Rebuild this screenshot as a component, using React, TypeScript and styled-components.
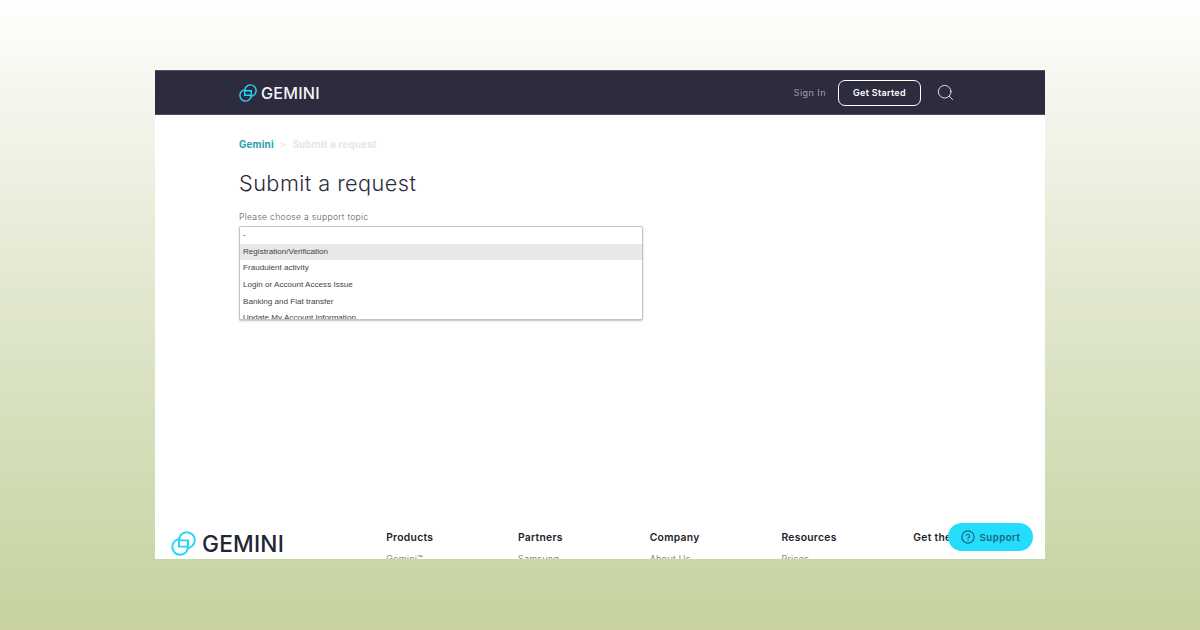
import React from 'react'
import styled, { createGlobalStyle } from 'styled-components'
import { Search } from 'lucide-react'

const GlobalStyle = createGlobalStyle`
  html, body {
    margin: 0;
    height: 630px;
    overflow: hidden;
  }
  body {
    background: linear-gradient(180deg, #ffffff 0%, #f4f6ec 16%, #dfe6cc 50%, #cdd8ab 85%, #c7d2a0 100%);
    font-family: "Inter", "Liberation Sans", sans-serif;
  }
`

const Stage = styled.div`
  padding: 70px 155px 0;
`

const Browser = styled.div`
  position: relative;
  height: 489px;
  background: #fff;
  overflow: hidden;
`

const Header = styled.header`
  height: 45px;
  box-sizing: border-box;
  background: #2d2c3e;
  border-top: 1px solid #55546a;
  border-bottom: 1px solid #4a4958;
  display: flex;
  align-items: center;
  padding: 0 90px 0 84px;
`

const Logo = styled.div<{ $large?: boolean }>`
  display: flex;
  align-items: center;
  gap: ${({ $large }) => ($large ? '6px' : '4px')};
  font-family: "Inter", sans-serif;
  font-weight: 500;
  font-size: ${({ $large }) => ($large ? '22.7px' : '16.2px')};
  letter-spacing: 0.2px;
  color: ${({ $large }) => ($large ? '#1f2733' : '#f4f4f6')};
`

const Nav = styled.nav`
  margin-left: auto;
  display: flex;
  align-items: center;
`

const SignIn = styled.a`
  font-size: 9px;
  font-weight: 300;
  letter-spacing: 0.5px;
  color: #c0c0c8;
  margin-right: 12px;
`

const GetStarted = styled.a`
  width: 83px;
  height: 26px;
  box-sizing: border-box;
  border: 1.5px solid #fff;
  border-radius: 7px;
  display: flex;
  align-items: center;
  justify-content: center;
  font-size: 9px;
  font-weight: 600;
  letter-spacing: 0.3px;
  color: #fff;
  margin-right: 15px;
`

const Main = styled.main`
  padding: 23px 84px 0;
  height: 400px;
  box-sizing: border-box;
`

const Crumbs = styled.div`
  display: flex;
  gap: 6px;
  font-size: 9.8px;
  font-weight: 700;
  line-height: 13px;
  letter-spacing: 0.2px;
`

const CrumbLink = styled.span`
  color: #2a9db3;
`

const CrumbSep = styled.span`
  color: #dfe3e5;
  font-weight: 400;
`

const CrumbCurrent = styled.span`
  color: #e4e6e8;
`

const Title = styled.h1`
  margin: 18px 0 0;
  font-size: 21.7px;
  line-height: 28px;
  font-weight: 300;
  letter-spacing: 0.45px;
  color: #2d2c3e;
`

const FieldLabel = styled.label`
  display: block;
  margin-top: 14px;
  font-size: 8.6px;
  font-weight: 300;
  line-height: 12px;
  letter-spacing: 0.3px;
  color: #5c5c5c;
`

const ListBox = styled.div`
  margin-top: 3px;
  width: 404px;
  height: 94px;
  box-sizing: border-box;
  border: 1px solid #c4c4c4;
  border-radius: 2px;
  box-shadow: 0 1px 2px rgba(0, 0, 0, 0.25);
  overflow: hidden;
  background: #fff;
`

const Option = styled.div<{ $active?: boolean }>`
  height: 16.7px;
  line-height: 16px;
  padding-left: 3px;
  font-family: "Liberation Sans", Arial, sans-serif;
  font-size: 8.1px;
  color: #444;
  white-space: nowrap;
  background: ${({ $active }) => ($active ? '#e8e8e8' : 'transparent')};
`

const Footer = styled.footer`
  display: flex;
  align-items: flex-start;
  padding: 0 0 0 16px;
`

const FooterBrand = styled.div`
  width: 215.5px;
  padding-top: 15px;
`

const FooterColumn = styled.div`
  width: 132px;
  padding-top: 15px;
`

const ColumnTitle = styled.div`
  font-size: 10.3px;
  line-height: 14px;
  font-weight: 600;
  letter-spacing: 0.3px;
  color: #22222c;
  white-space: nowrap;
`

const ColumnLink = styled.div`
  margin-top: 9px;
  font-size: 9px;
  font-weight: 300;
  line-height: 12px;
  letter-spacing: 0.3px;
  color: #5c5c5c;
`

const SupportButton = styled.button`
  position: absolute;
  left: 793px;
  top: 453px;
  width: 85px;
  height: 28px;
  border: 0;
  border-radius: 14px;
  background: #24dcfb;
  display: flex;
  align-items: center;
  justify-content: center;
  gap: 5px;
  padding: 0;
  font-family: "Inter", sans-serif;
  font-size: 9.6px;
  font-weight: 600;
  letter-spacing: 0.5px;
  color: #1c6478;
`

const GeminiMark = ({ size, color }: { size: number; color: string }) => (
  <svg width={size} height={size} viewBox="0 0 24 24" fill="none" stroke={color} strokeWidth="1.9">
    <path d="M7.6 9A7.6 7.6 0 1 1 15 16.4" />
    <path d="M16.4 15A7.6 7.6 0 1 1 9 7.6" />
    <path d="M7.6 9H16.4V15M16.4 15H7.6V9" />
  </svg>
)

const QuestionIcon = () => (
  <svg width="14" height="14" viewBox="0 0 24 24" fill="none" stroke="#1c6478" strokeWidth="2" strokeLinecap="round">
    <circle cx="12" cy="12" r="10.5" />
    <path d="M9 9.2a3 3 0 0 1 5.8 1c0 2-2.8 2.4-2.8 4" />
    <path d="M12 17.6v.1" />
  </svg>
)

const topics = [
  '-',
  'Registration/Verification',
  'Fraudulent activity',
  'Login or Account Access Issue',
  'Banking and Fiat transfer',
  'Update My Account Information',
]

const columns = [
  { title: 'Products', link: 'Gemini™' },
  { title: 'Partners', link: 'Samsung' },
  { title: 'Company', link: 'About Us' },
  { title: 'Resources', link: 'Prices' },
  { title: 'Get the App', link: '' },
]

const App: React.FC = () => {
  return (
    <Stage>
      <GlobalStyle />
      <Browser>
        <Header>
          <Logo>
            <GeminiMark size={18} color="#25d6f5" />
            GEMINI
          </Logo>
          <Nav>
            <SignIn>Sign In</SignIn>
            <GetStarted>Get Started</GetStarted>
            <Search size={19} color="#e6e6ea" strokeWidth={1.2} />
          </Nav>
        </Header>
        <Main>
          <Crumbs>
            <CrumbLink>Gemini</CrumbLink>
            <CrumbSep>&gt;</CrumbSep>
            <CrumbCurrent>Submit a request</CrumbCurrent>
          </Crumbs>
          <Title>Submit a request</Title>
          <FieldLabel>Please choose a support topic</FieldLabel>
          <ListBox>
            {topics.map((topic, i) => (
              <Option key={topic} $active={i === 1}>
                {topic}
              </Option>
            ))}
          </ListBox>
        </Main>
        <Footer>
          <FooterBrand>
            <Logo $large>
              <GeminiMark size={25} color="#25d6f5" />
              GEMINI
            </Logo>
          </FooterBrand>
          {columns.map((col) => (
            <FooterColumn key={col.title}>
              <ColumnTitle>{col.title}</ColumnTitle>
              {col.link && <ColumnLink>{col.link}</ColumnLink>}
            </FooterColumn>
          ))}
        </Footer>
        <SupportButton>
          <QuestionIcon />
          Support
        </SupportButton>
      </Browser>
    </Stage>
  )
}

export default App
